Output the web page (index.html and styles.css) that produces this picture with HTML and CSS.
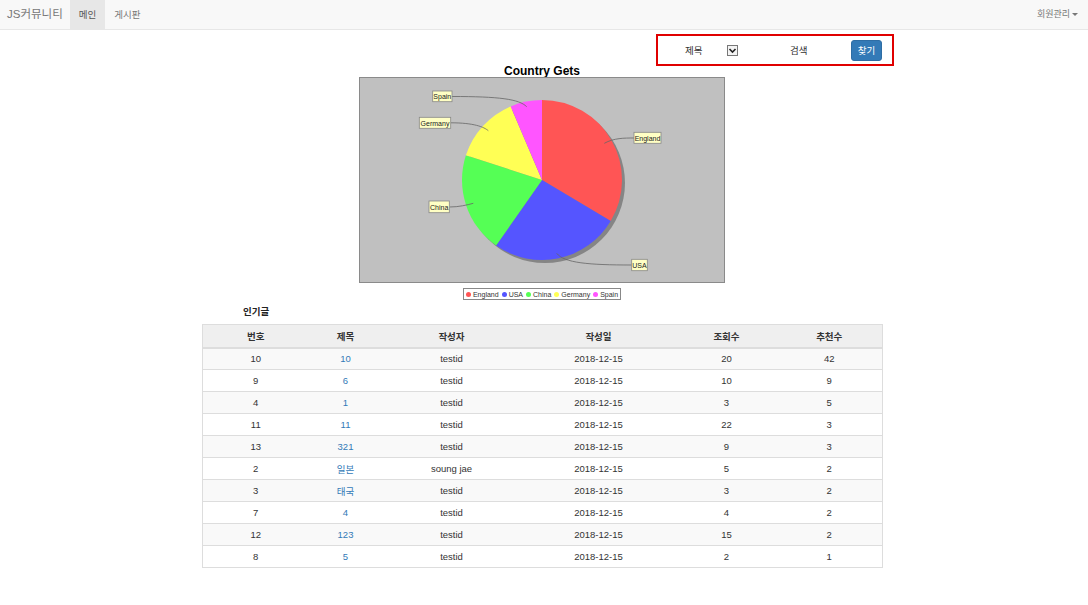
FILE: index.html
```html
<!DOCTYPE html>
<html lang="ko">
<head>
<meta charset="utf-8">
<title>JS커뮤니티</title>
<link rel="stylesheet" href="styles.css">
</head>
<body>
<nav class="navbar">
  <a class="brand">JS커뮤니티</a>
  <a class="nav-item active">메인</a>
  <a class="nav-item">게시판</a>
  <span class="spacer"></span>
  <a class="nav-item dropdown">회원관리<span class="caret"></span></a>
</nav>

<div class="search-row">
  <form class="search-box">
    <span class="s-label">제목</span>
    <span class="s-select"><svg width="9" height="7" viewBox="0 0 9 7"><path d="M1.5 2 L4.5 5 L7.5 2" fill="none" stroke="#222" stroke-width="1.6"/></svg></span>
    <span class="s-input">검색</span>
    <button type="button" class="btn">찾기</button>
  </form>
</div>

<div class="chart">
  <div class="chart-title">Country Gets</div>
  <svg class="plot" width="366" height="206" viewBox="0 0 366 206">
    <rect x="0.5" y="0.5" width="365" height="205" fill="#c0c0c0" stroke="#8a8a8a"/>
    <circle cx="186" cy="106" r="80" fill="#858585"/>
    <path d="M183,103 L183,23 A80,80 0 0 1 251.7,144 Z" fill="#ff5555"/>
    <path d="M183,103 L251.7,144 A80,80 0 0 1 137.1,168.5 Z" fill="#5555ff"/>
    <path d="M183,103 L137.1,168.5 A80,80 0 0 1 106.9,78.3 Z" fill="#55ff55"/>
    <path d="M183,103 L106.9,78.3 A80,80 0 0 1 151.7,29.4 Z" fill="#ffff55"/>
    <path d="M183,103 L151.7,29.4 A80,80 0 0 1 183,23 Z" fill="#ff55ff"/>
    <g fill="none" stroke="#666" stroke-width="0.8">
      <path d="M93,19.5 C140,19.5 160,22 167.7,29.7"/>
      <path d="M91.7,45.8 C115,45.8 125,50 129.3,53.7"/>
      <path d="M245.3,66.3 C255,61 265,61 275,61"/>
      <path d="M90.3,130 C100,130 108,128 114.3,126.3"/>
      <path d="M197.7,176.3 C205,186 230,188 272.7,188"/>
    </g>
    <g fill="#ffffc4" stroke="#888" stroke-width="0.8">
      <rect x="73.7" y="14" width="19.3" height="10.7"/>
      <rect x="60.3" y="40.3" width="31.4" height="11"/>
      <rect x="275" y="55.3" width="27" height="11"/>
      <rect x="70" y="124" width="20.3" height="11.7"/>
      <rect x="272.7" y="182.3" width="15.6" height="11.4"/>
    </g>
    <g font-family="Liberation Sans, sans-serif" font-size="7" fill="#222" text-anchor="middle">
      <text x="83.3" y="22">Spain</text>
      <text x="76" y="48.5">Germany</text>
      <text x="288.5" y="63.5">England</text>
      <text x="80.2" y="132.5">China</text>
      <text x="280.5" y="190.5">USA</text>
    </g>
  </svg>
  <div class="legend">
    <span class="lg"><i class="dot red"></i>England</span>
    <span class="lg"><i class="dot blue"></i>USA</span>
    <span class="lg"><i class="dot green"></i>China</span>
    <span class="lg"><i class="dot yellow"></i>Germany</span>
    <span class="lg"><i class="dot pink"></i>Spain</span>
  </div>
</div>

<section class="popular">
  <h4 class="popular-title">인기글</h4>
  <table class="board">
    <colgroup>
      <col class="c1"><col class="c2"><col class="c3"><col class="c4"><col class="c5"><col class="c6">
    </colgroup>
    <thead>
      <tr><th>번호</th><th>제목</th><th>작성자</th><th>작성일</th><th>조회수</th><th>추천수</th></tr>
    </thead>
    <tbody>
      <tr><td>10</td><td><a>10</a></td><td>testid</td><td>2018-12-15</td><td>20</td><td>42</td></tr>
      <tr><td>9</td><td><a>6</a></td><td>testid</td><td>2018-12-15</td><td>10</td><td>9</td></tr>
      <tr><td>4</td><td><a>1</a></td><td>testid</td><td>2018-12-15</td><td>3</td><td>5</td></tr>
      <tr><td>11</td><td><a>11</a></td><td>testid</td><td>2018-12-15</td><td>22</td><td>3</td></tr>
      <tr><td>13</td><td><a>321</a></td><td>testid</td><td>2018-12-15</td><td>9</td><td>3</td></tr>
      <tr><td>2</td><td><a>일본</a></td><td>soung jae</td><td>2018-12-15</td><td>5</td><td>2</td></tr>
      <tr><td>3</td><td><a>태국</a></td><td>testid</td><td>2018-12-15</td><td>3</td><td>2</td></tr>
      <tr><td>7</td><td><a>4</a></td><td>testid</td><td>2018-12-15</td><td>4</td><td>2</td></tr>
      <tr><td>12</td><td><a>123</a></td><td>testid</td><td>2018-12-15</td><td>15</td><td>2</td></tr>
      <tr><td>8</td><td><a>5</a></td><td>testid</td><td>2018-12-15</td><td>2</td><td>1</td></tr>
    </tbody>
  </table>
</section>
</body>
</html>
```

FILE: styles.css
```css
* { box-sizing: border-box; }
html, body { margin: 0; padding: 0; background: #fff; }
body {
  font-family: "Liberation Sans", "Noto Sans CJK KR", sans-serif;
  font-size: 9.5px;
  color: #333;
}

.navbar {
  display: flex;
  align-items: stretch;
  height: 30px;
  background: #f8f8f8;
  border-bottom: 1px solid #e7e7e7;
}
.brand {
  font-size: 11.5px;
  color: #777;
  line-height: 29px;
  padding: 0 7px 0 7px;
}
.nav-item {
  color: #777;
  font-size: 9.5px;
  line-height: 29px;
  padding: 0 9px;
}
.nav-item.active { background: #e7e7e7; color: #555; }
.spacer { flex: 1; }
.dropdown { padding-right: 10px; font-size: 9px; }
.caret {
  display: inline-block;
  width: 0; height: 0;
  margin-left: 2px;
  vertical-align: middle;
  border-top: 3px solid #777;
  border-left: 3px solid transparent;
  border-right: 3px solid transparent;
}

.search-row {
  display: flex;
  justify-content: flex-end;
  padding-right: 194px;
  margin-top: 4px;
}
.search-box {
  display: flex;
  align-items: center;
  width: 238px;
  height: 32px;
  border: 2px solid #e00000;
  padding-left: 27px;
  margin: 0;
}
.s-label { width: 42px; color: #333; }
.s-select {
  display: flex;
  align-items: center;
  justify-content: center;
  width: 11px;
  height: 11px;
  border: 1px solid #777;
  background: #f4f4f4;
}
.s-input { margin-left: 52px; width: 61px; color: #333; }
.btn {
  width: 31px;
  height: 21px;
  border: 1px solid #2e6da4;
  border-radius: 3px;
  background: #337ab7;
  color: #fff;
  font-family: inherit;
  font-size: 9.5px;
  padding: 0;
}

.chart {
  width: 366px;
  margin: -1px 0 0 359px;
  display: flex;
  flex-direction: column;
  align-items: center;
}
.chart-title {
  font-family: "Liberation Sans", sans-serif;
  font-weight: bold;
  font-size: 12px;
  color: #000;
  line-height: 12px;
  height: 12px;
}
.plot { display: block; }
.legend {
  display: flex;
  align-items: center;
  gap: 3px;
  margin-top: 5px;
  height: 12px;
  border: 1px solid #888;
  padding: 0 2px;
  background: #fff;
  font-size: 7px;
  color: #333;
}
.lg { display: flex; align-items: center; }
.dot {
  display: inline-block;
  width: 5px; height: 5px;
  border-radius: 50%;
  margin-right: 2px;
}
.red { background: #ff5555; }
.blue { background: #5555ff; }
.green { background: #55ff55; }
.yellow { background: #ffff55; }
.pink { background: #ff55ff; }

.popular {
  width: 680px;
  margin: 6px 0 0 202px;
}
.popular-title {
  margin: 0 0 6px 0;
  padding-left: 41px;
  font-size: 9.5px;
  font-weight: bold;
  line-height: 12px;
  color: #222;
}
.board {
  width: 680px;
  border-collapse: collapse;
  border: 1px solid #ddd;
  table-layout: fixed;
}
.c1 { width: 106px; }
.c2 { width: 74px; }
.c3 { width: 138px; }
.c4 { width: 156px; }
.c5 { width: 100px; }
.c6 { width: 106px; }
.board th, .board td {
  text-align: center;
  padding: 0;
  height: 22px;
  border-top: 1px solid #ddd;
}
.board th {
  height: 23px;
  background: #efefef;
  font-weight: bold;
  color: #333;
  border-bottom: 2px solid #ddd;
}
.board tbody tr:nth-child(odd) td { background: #f9f9f9; }
.board a { color: #337ab7; }
```
